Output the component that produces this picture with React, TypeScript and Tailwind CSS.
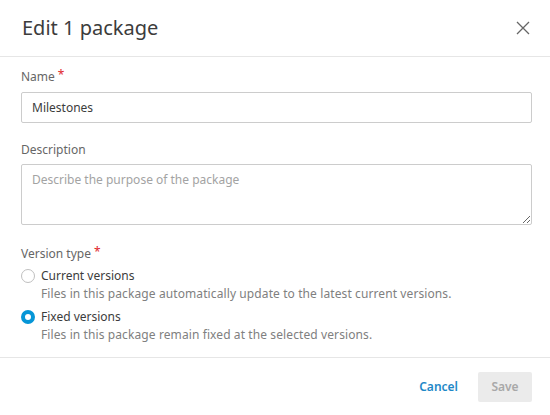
import { useState } from "react";

const FONT = "font-['Noto_Sans',_'Liberation_Sans',_sans-serif]";

function Label({ text, required }: { text: string; required?: boolean }) {
  return (
    <div className="flex items-start text-[12px] leading-[16px] text-[#666666]">
      <span>{text}</span>
      {required && <span className="ml-[3px] -mt-[2px] text-[12px] text-[#e0262b]">*</span>}
    </div>
  );
}

function Radio({
  checked,
  title,
  hint,
  onSelect,
}: {
  checked: boolean;
  title: string;
  hint: string;
  onSelect: () => void;
}) {
  return (
    <div className="flex gap-[6px] cursor-pointer" onClick={onSelect}>
      <div className="pt-[1px]">
        {checked ? (
          <div className="h-[14px] w-[14px] rounded-full border-[4px] border-[#0696d7] bg-white" />
        ) : (
          <div className="h-[14px] w-[14px] rounded-full border border-[#bfbfbf] bg-white" />
        )}
      </div>
      <div className="flex flex-col">
        <span className="text-[12px] leading-[16px] text-[#3c3c3c]">{title}</span>
        <span className="mt-[2px] text-[12px] leading-[16px] text-[#808080] tracking-[0.1px]">{hint}</span>
      </div>
    </div>
  );
}

export default function App() {
  const [mode, setMode] = useState<"current" | "fixed">("fixed");
  const [name, setName] = useState("Milestones");

  return (
    <div className={`${FONT} h-[415px] w-[550px] bg-white flex flex-col`}>
      {/* Header */}
      <div className="flex h-[57px] items-center justify-between border-b border-[#e6e6e6] pl-[22px] pr-[20px]">
        <h2 className="text-[20px] font-normal text-[#3c3c3c]">Edit 1 package</h2>
        <button className="text-[#666666]" aria-label="Close">
          <svg width="14" height="14" viewBox="0 0 14 14" fill="none" stroke="currentColor" strokeWidth="1.3">
            <path d="M1 1l12 12M13 1L1 13" />
          </svg>
        </button>
      </div>

      {/* Body */}
      <div className="flex flex-col pl-[21px] pr-[18px] pt-[12px] border-b border-[#e6e6e6] h-[301px]">
        <Label text="Name" required />
        <input
          value={name}
          onChange={(e) => setName(e.target.value)}
          className="mt-[7px] h-[31px] w-full rounded-[2px] border border-[#cccccc] px-[10px] text-[12px] text-[#3c3c3c] outline-none"
        />

        <div className="mt-[19px]">
          <Label text="Description" />
        </div>
        <textarea
          placeholder="Describe the purpose of the package"
          className="mt-[6px] h-[61px] w-full rounded-[2px] border border-[#cccccc] px-[10px] py-[6px] text-[12px] text-[#3c3c3c] placeholder:text-[#a3a3a3] outline-none"
        />

        <div className="mt-[21px]">
          <Label text="Version type" required />
        </div>
        <div className="mt-[6px] flex flex-col gap-[7px]">
          <Radio
            checked={mode === "current"}
            title="Current versions"
            hint="Files in this package automatically update to the latest current versions."
            onSelect={() => setMode("current")}
          />
          <Radio
            checked={mode === "fixed"}
            title="Fixed versions"
            hint="Files in this package remain fixed at the selected versions."
            onSelect={() => setMode("fixed")}
          />
        </div>
      </div>

      {/* Footer */}
      <div className="flex items-center justify-end gap-[20px] px-[18px] pt-[14px]">
        <button className="text-[12px] font-semibold text-[#1e88c7]">Cancel</button>
        <button
          disabled
          className="h-[30px] w-[54px] rounded-[2px] bg-[#ebebeb] text-[12px] font-semibold text-[#a8a8a8]"
        >
          Save
        </button>
      </div>
    </div>
  );
}
